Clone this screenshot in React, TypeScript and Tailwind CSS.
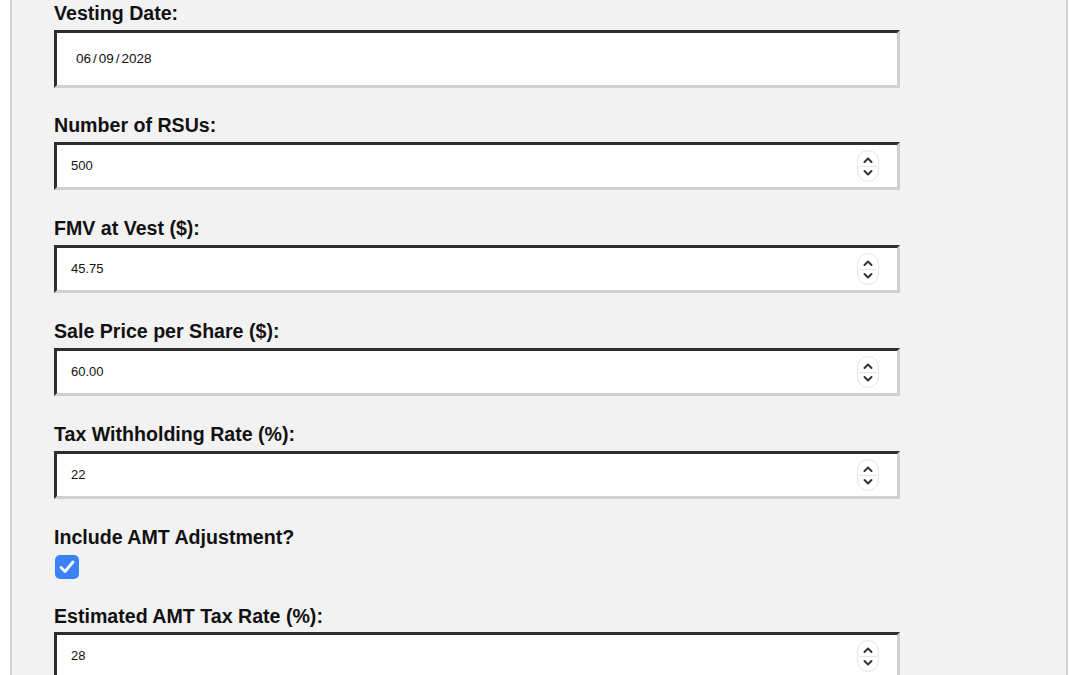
import React from "react";

function Spinner() {
  return (
    <div className="flex h-[32px] w-[22px] flex-col items-center justify-center rounded-full border border-[#e4e4e4] bg-white">
      <svg width="12" height="10" viewBox="0 0 12 10" className="mb-[1px]">
        <path d="M2.5 7 L6 3.5 L9.5 7" fill="none" stroke="#333" strokeWidth="2" strokeLinecap="round" strokeLinejoin="round" />
      </svg>
      <div className="h-px w-[18px] bg-[#e6e6e6]" />
      <svg width="12" height="10" viewBox="0 0 12 10" className="mt-[1px]">
        <path d="M2.5 3 L6 6.5 L9.5 3" fill="none" stroke="#333" strokeWidth="2" strokeLinecap="round" strokeLinejoin="round" />
      </svg>
    </div>
  );
}

function Label({ children }: { children: React.ReactNode }) {
  return (
    <div className="mb-[6px] text-[19.6px] font-bold leading-[22px] text-[#111]">{children}</div>
  );
}

function NumberField({ label, value }: { label: string; value: string }) {
  return (
    <div className="mb-[27px]">
      <Label>{label}</Label>
      <div className="flex h-[48px] w-[846px] items-center border-[3px] border-t-[#2e2e2e] border-l-[#2e2e2e] border-b-[#d0d0d0] border-r-[#d0d0d0] bg-white pl-[14px] pr-[18px]">
        <span className="flex-1 text-[13px] text-[#111]">{value}</span>
        <Spinner />
      </div>
    </div>
  );
}

export default function App() {
  return (
    <div
      className="min-h-[675px] bg-white pl-[10px] pr-[12px]"
      style={{ fontFamily: '"Liberation Sans", Arial, sans-serif' }}
    >
      <div className="min-h-[675px] border-x-2 border-[#d2d2d2] bg-[#f2f2f2] pl-[42px] pt-[2px]">
        <div className="mb-[26px]">
          <Label>Vesting Date:</Label>
          <div className="flex h-[58px] w-[846px] items-center border-[3px] border-t-[#2e2e2e] border-l-[#2e2e2e] border-b-[#d0d0d0] border-r-[#d0d0d0] bg-white pl-[19px]">
            <span className="text-[13.5px] text-[#111]">06<span className="mx-[2px]">/</span>09<span className="mx-[2px]">/</span>2028</span>
          </div>
        </div>
        <NumberField label="Number of RSUs:" value="500" />
        <NumberField label="FMV at Vest ($):" value="45.75" />
        <NumberField label="Sale Price per Share ($):" value="60.00" />
        <NumberField label="Tax Withholding Rate (%):" value="22" />
        <div className="mb-[26px]">
          <div className="mb-[7px] text-[19.6px] font-bold leading-[22px] text-[#111]">Include AMT Adjustment?</div>
          <div className="ml-[1px] flex h-[24px] w-[24px] items-center justify-center rounded-[5px] bg-[#3b82f6]">
            <svg width="20" height="18" viewBox="0 0 20 18">
              <path d="M4 9.5 L8 13.5 L16 4" fill="none" stroke="white" strokeWidth="2.8" strokeLinecap="round" strokeLinejoin="round" />
            </svg>
          </div>
        </div>
        <div className="mb-[27px]">
          <div className="mb-[5px] text-[19.6px] font-bold leading-[22px] text-[#111]">Estimated AMT Tax Rate (%):</div>
          <div className="flex h-[48px] w-[846px] items-center border-[3px] border-t-[#2e2e2e] border-l-[#2e2e2e] border-b-[#d0d0d0] border-r-[#d0d0d0] bg-white pl-[14px] pr-[18px]">
            <span className="flex-1 text-[13px] text-[#111]">28</span>
            <Spinner />
          </div>
        </div>
      </div>
    </div>
  );
}
